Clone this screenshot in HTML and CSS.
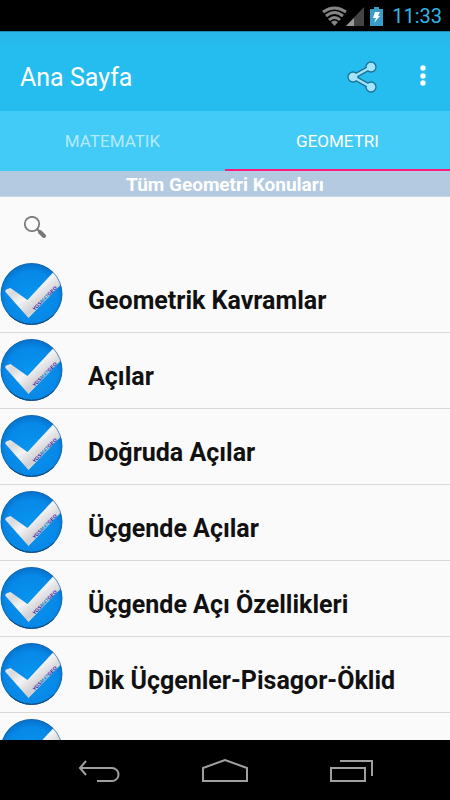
FILE: index.html
```html
<!DOCTYPE html>
<html lang="tr">
<head>
<meta charset="utf-8">
<meta name="viewport" content="width=device-width, initial-scale=1">
<title>Ana Sayfa</title>
<link rel="stylesheet" href="styles.css">
</head>
<body>
<svg class="defs" aria-hidden="true">
  <defs>
    <radialGradient id="blue" cx="50%" cy="55%" r="52%">
      <stop offset="0" stop-color="#079bf6"/>
      <stop offset=".8" stop-color="#078cec"/>
      <stop offset="1" stop-color="#0676d2"/>
    </radialGradient>
    <linearGradient id="silver" x1="0" y1="0" x2="1" y2="1">
      <stop offset="0" stop-color="#ffffff"/>
      <stop offset=".3" stop-color="#d6d9df"/>
      <stop offset=".45" stop-color="#f4f4f6"/>
      <stop offset=".65" stop-color="#cfcfd3"/>
      <stop offset="1" stop-color="#ececee"/>
    </linearGradient>
    <linearGradient id="word" x1="0" x2="1">
      <stop offset="0" stop-color="#1520a8"/>
      <stop offset=".35" stop-color="#1520a8"/>
      <stop offset=".36" stop-color="#1683c4"/>
      <stop offset=".66" stop-color="#1683c4"/>
      <stop offset=".67" stop-color="#1520a8"/>
      <stop offset="1" stop-color="#1520a8"/>
    </linearGradient>
    <pattern id="weave" width="3" height="3" patternUnits="userSpaceOnUse" patternTransform="rotate(-35)">
      <path d="M0 1H3" stroke="#0560b8" stroke-width="1" opacity=".28"/>
    </pattern>
    <clipPath id="disc"><circle cx="31" cy="31" r="31"/></clipPath>
    <symbol id="badge" viewBox="0 0 62 62">
      <g clip-path="url(#disc)">
        <circle cx="31" cy="31" r="31" fill="url(#blue)"/>
        <circle cx="31" cy="31" r="31" fill="url(#weave)"/>
        <path d="M5 29Q4 27 7 26L10 25L27 37L53 9L62 20L28 55Z" fill="url(#silver)"/>
        <text class="wordmark" transform="translate(34 48) rotate(-45)" fill="url(#word)">YGSMATGEO</text>
      </g>
      <path d="M9 52A30.500 30.500 0 0 0 53 52" fill="none" stroke="#16324f" stroke-width="1"/>
      <circle cx="31" cy="31" r="30.500" fill="none" stroke="#1b5f9c" stroke-width="1" opacity=".6"/>
    </symbol>
  </defs>
</svg>
<div class="screen">
  <div class="status">
    <svg class="status-icons" width="62" height="22" viewBox="0 0 62 22" aria-hidden="true">
      <g fill="none" stroke="#858585" stroke-width="3">
        <path d="M1 7Q12.500 -1 24 7"/>
        <path d="M4 11Q12.500 4 21 11"/>
        <path d="M7 15Q12.500 10 18 15"/>
      </g>
      <path d="M9 17Q12.500 14 16 17L12.500 21Z" fill="#858585"/>
      <path d="M24 21L42 2V21Z" fill="#444"/>
      <path d="M24 21L32 13V21Z" fill="#999"/>
      <path d="M52 2H57V4H61V21H48V4H52Z" fill="#3a9dc8"/>
      <path d="M53 7H58L56 11H58L52 18L54 13H51Z" fill="#fff"/>
    </svg>
    <time>11:33</time>
  </div>
  <header class="bar">
    <h1>Ana Sayfa</h1>
    <button class="icon-button" type="button" aria-label="Paylaş">
      <svg width="32" height="34" viewBox="0 0 32 34">
        <path d="M6 17L24 7M6 17L24 27" fill="none" stroke="#1a7293" stroke-width="5"/>
        <g fill="#a5e5fb" stroke="#1a7293" stroke-width="1.300">
          <circle cx="6" cy="17" r="5"/><circle cx="24" cy="7" r="5"/><circle cx="24" cy="27" r="5"/>
        </g>
        <path d="M6 17L24 7M6 17L24 27" fill="none" stroke="#a5e5fb" stroke-width="2.500"/>
      </svg>
    </button>
    <button class="icon-button more" type="button" aria-label="Diğer seçenekler">
      <svg width="8" height="24" viewBox="0 0 8 24" fill="#fff"><circle cx="4" cy="3" r="2.700"/><circle cx="4" cy="11" r="2.700"/><circle cx="4" cy="18" r="2.700"/></svg>
    </button>
  </header>
  <nav class="tabs">
    <a href="#matematik">MATEMATIK</a>
    <a class="active" href="#geometri" aria-current="page">GEOMETRI</a>
  </nav>
  <main id="geometri">
    <h2>Tüm Geometri Konuları</h2>
    <label class="search">
      <svg width="24" height="24" viewBox="0 0 24 24" aria-hidden="true">
        <circle cx="8" cy="8" r="7.200" fill="none" stroke="#777" stroke-width="1.700"/>
        <path d="M13 13L16 16" stroke="#777" stroke-width="2"/>
        <path d="M16 16L20 20" stroke="#777" stroke-width="4" stroke-linecap="round"/>
      </svg>
      <input type="search" aria-label="Konu ara">
    </label>
    <ul class="topics">
      <li><a href="#t1"><svg class="badge" aria-hidden="true"><use href="#badge"/></svg><span>Geometrik Kavramlar</span></a></li>
      <li><a href="#t2"><svg class="badge" aria-hidden="true"><use href="#badge"/></svg><span>Açılar</span></a></li>
      <li><a href="#t3"><svg class="badge" aria-hidden="true"><use href="#badge"/></svg><span>Doğruda Açılar</span></a></li>
      <li><a href="#t4"><svg class="badge" aria-hidden="true"><use href="#badge"/></svg><span>Üçgende Açılar</span></a></li>
      <li><a href="#t5"><svg class="badge" aria-hidden="true"><use href="#badge"/></svg><span>Üçgende Açı Özellikleri</span></a></li>
      <li><a href="#t6"><svg class="badge" aria-hidden="true"><use href="#badge"/></svg><span>Dik Üçgenler-Pisagor-Öklid</span></a></li>
      <li><a href="#t7" aria-label="Sonraki konu"><svg class="badge" aria-hidden="true"><use href="#badge"/></svg></a></li>
    </ul>
  </main>
  <footer class="system">
    <button type="button" aria-label="Geri">
      <svg width="44" height="26" viewBox="0 0 44 26"><path d="M9 2L3 9L9 16M3 9H35A6 6 0 0 1 35 22H20" fill="none" stroke="#a0a0a0" stroke-width="2"/></svg>
    </button>
    <button type="button" aria-label="Ana ekran">
      <svg width="48" height="26" viewBox="0 0 48 26"><path d="M2 22V9L24 1L46 9V22Z" fill="none" stroke="#a0a0a0" stroke-width="2"/></svg>
    </button>
    <button type="button" aria-label="Son uygulamalar">
      <svg width="44" height="26" viewBox="0 0 44 26"><path d="M2 9H36V22H2ZM11 2H43V17" fill="none" stroke="#a0a0a0" stroke-width="2"/></svg>
    </button>
  </footer>
</div>
</body>
</html>
```
FILE: styles.css
```css
* { box-sizing: border-box; }
body {
  margin: 0;
  background: #fafafa;
  color: #111;
  font-family: Roboto, "Noto Sans", sans-serif;
}
a { color: inherit; text-decoration: none; }
button { padding: 0; border: 0; background: none; display: flex; align-items: center; justify-content: center; }
h1, h2, ul { margin: 0; padding: 0; }
svg { display: block; }
.defs { position: absolute; width: 0; height: 0; }
.screen { display: flex; flex-direction: column; height: 100vh; overflow: hidden; }

.status {
  flex: none;
  display: flex;
  align-items: center;
  justify-content: flex-end;
  gap: 8px;
  height: 31px;
  padding: 0 8px 0 0;
  background: #000;
  color: #33b5e5;
  font-size: 20px;
}

.bar {
  flex: none;
  display: flex;
  align-items: center;
  height: 80px;
  padding: 12px 7px 0 20px;
  background: linear-gradient(#27b5e5, #25bcef 14px);
  border-top: 1px solid #1e8db3;
  color: #fff;
}
.bar h1 { flex: 1; font-size: 25px; font-weight: 400; }
.icon-button { width: 60px; height: 52px; padding-bottom: 2px; }
.more { width: 40px; margin-left: 10px; }

.tabs { flex: none; display: grid; grid-template-columns: 1fr 1fr; height: 60px; background: #43cbf7; color: #fff; font-size: 17px; }
.tabs a { display: flex; align-items: center; justify-content: center; color: #b4eafc; border-bottom: 2px solid transparent; padding-top: 2px; }
.tabs .active { color: #fff; border-color: #ff1f7a; }

main { flex: 1; min-height: 0; overflow: hidden; }
h2 { height: 26px; line-height: 27px; background: #b4cae0; border-bottom: 1px solid #c9d8e6; color: #fff; font-size: 19px; font-weight: 700; text-align: center; }
.search { display: flex; align-items: center; gap: 12px; height: 60px; padding: 2px 24px 0; }
.search input { flex: 1; min-width: 0; height: 40px; border: 0; background: none; font: inherit; font-size: 18px; outline: 0; }

.topics { list-style: none; }
.topics li { border-bottom: 1px solid #d9d9d9; }
.topics a { display: flex; align-items: center; gap: 25px; height: 75px; padding: 0 0 1px; font-size: 25px; font-weight: 700; }
.topics span { padding-top: 12px; white-space: nowrap; }
.badge { flex: none; width: 63px; height: 62px; }
.wordmark { font: italic 700 5px "Liberation Sans", sans-serif; }

.system { flex: none; display: flex; align-items: center; justify-content: center; gap: 6px; height: 60px; padding-top: 4px; background: #000; }
.system button { width: 120px; height: 48px; }
```
